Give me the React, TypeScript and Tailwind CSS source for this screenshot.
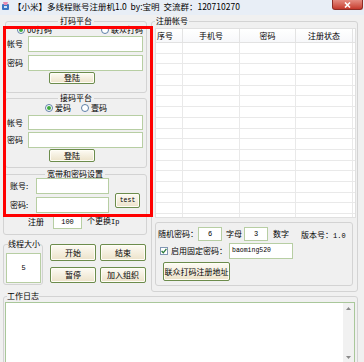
import React from 'react';

// shared looks of the themed win32 controls
const groupBorder = 'border border-[#d3d3d3] rounded-[3px]';
const editBox = 'bg-white border border-[#b7cea3]';
const mono = "font-['Liberation_Mono',monospace]";

function Btn({ children, className = '' }: { children: React.ReactNode; className?: string }) {
  return (
    <div
      className={`flex items-center justify-center border border-[#6c8c4c] rounded-[2px] bg-linear-to-b from-[#fdfbf4] to-[#ece2c9] shadow-[inset_0_0_0_1px_#fffdf6] ${className}`}
    >
      {children}
    </div>
  );
}

function Radio({ checked = false }: { checked?: boolean }) {
  return (
    <span className="w-[8px] h-[8px] shrink-0 rounded-full border border-[#5d7fa8] bg-white flex items-center justify-center">
      {checked && <span className="w-[4px] h-[4px] rounded-full bg-[#3da83d]" />}
    </span>
  );
}

function Field({ label, labelWidth, className = '' }: { label: string; labelWidth: string; className?: string }) {
  return (
    <div className={`flex items-center ${className}`}>
      <span className={`${labelWidth} shrink-0`}>{label}</span>
      <div className={`${editBox} h-full w-[115px]`} />
    </div>
  );
}

function TitleBar() {
  return (
    <div className="h-[15px] flex items-start bg-[#e8eef6]">
      <svg className="ml-[1px] mt-[1px]" width="9" height="10" viewBox="0 0 9 10">
        <rect x="1" y="3" width="7" height="6" rx="1" fill="#3a76c2" />
        <path d="M2 1 L7 1 L6 4 L3 4 Z" fill="#e58bb0" />
        <rect x="3" y="5" width="3" height="2" fill="#cfe2f7" />
      </svg>
      <span className="ml-[3px] mt-[1px] text-[8.5px] leading-[11px] whitespace-pre">
        【小米】多线程账号注册机1.0  by:宝明  交流群：120710270
      </span>
      <div className="ml-auto mr-[1px] w-[31px] h-[10px] rounded-b-[3px] border border-t-0 border-[#8d2d25] bg-linear-to-b from-[#e48b80] to-[#c5382c] flex items-center justify-center">
        <svg width="7" height="6" viewBox="0 0 7 6">
          <path d="M1 0.5 L6 5.5 M6 0.5 L1 5.5" stroke="#fff" strokeWidth="1.6" />
        </svg>
      </div>
    </div>
  );
}

function LeftColumn() {
  return (
    <div className="w-[148px] pl-[3px] flex flex-col">
      <fieldset className={`${groupBorder} ml-[2px] w-[142px] h-[77px] px-[1px]`}>
        <legend className="mx-auto px-[2px]">打码平台</legend>
        <div className="flex items-center h-[9px] -mt-[1px]">
          <span className="ml-[10px]"><Radio checked /></span>
          <span className="ml-[2px]">00打码</span>
          <span className="ml-auto"><Radio /></span>
          <span className="ml-[2px] mr-[2px]">联众打码</span>
        </div>
        <Field label="帐号" labelWidth="w-[21px]" className="mt-[2px] h-[16px]" />
        <Field label="密码" labelWidth="w-[21px]" className="mt-[3px] h-[16px]" />
        <Btn className="ml-[42px] mt-[1px] w-[46px] h-[12px]">登陆</Btn>
      </fieldset>

      <fieldset className={`${groupBorder} ml-[2px] w-[142px] h-[75px] px-[1px]`}>
        <legend className="mx-auto px-[2px]">接码平台</legend>
        <div className="flex items-center justify-center h-[8px] mt-[1px]">
          <Radio checked />
          <span className="ml-[2px]">爱码</span>
          <span className="ml-[10px]"><Radio /></span>
          <span className="ml-[2px]">壹码</span>
        </div>
        <Field label="帐号" labelWidth="w-[21px]" className="mt-[3px] h-[15px]" />
        <Field label="密码" labelWidth="w-[21px]" className="mt-[2px] h-[16px]" />
        <Btn className="ml-[42px] mt-[1px] w-[46px] h-[13px]">登陆</Btn>
      </fieldset>

      <fieldset className={`${groupBorder} mt-[1px] w-[144px] h-[66px] px-[1px]`}>
        <legend className="mx-auto px-[2px]">宽带和密码设置</legend>
        <div className="flex items-start -mt-[1px]">
          <div className="flex flex-col">
            <div className="flex items-center h-[16px]">
              <span className="w-[31px] pl-[5px]">账号:</span>
              <div className={`${editBox} w-[73px] h-full`} />
            </div>
            <div className="flex items-center h-[16px] mt-[3px]">
              <span className="w-[31px] pl-[5px]">密码:</span>
              <div className={`${editBox} w-[73px] h-full`} />
            </div>
          </div>
          <Btn className={`${mono} ml-[6px] mt-[15px] w-[25px] h-[15px] text-[6.5px]`}>test</Btn>
        </div>
        <div className="flex items-center h-[15px] mt-[1px]">
          <span className="ml-[23px]">注册</span>
          <div className={`${editBox} ${mono} ml-[9px] w-[29px] h-full flex items-center justify-center text-[7px]`}>100</div>
          <span className="ml-[5px]">
            个更换<span className={`${mono} text-[7px]`}>Ip</span>
          </span>
        </div>
      </fieldset>

      <div className="flex mt-[4px] h-[46px]">
        <fieldset className={`${groupBorder} w-[40px] h-[46px]`}>
          <legend className="ml-[4px]">线程大小</legend>
          <div className={`${editBox} ${mono} ml-[2px] mt-[4px] w-[35px] h-[30px] flex items-center justify-center text-[7px]`}>5</div>
        </fieldset>
        <div className="grid grid-cols-[46px_46px] grid-rows-[17px_16px] gap-x-[4px] gap-y-[6px] ml-[7px] mt-[5px]">
          <Btn>开始</Btn>
          <Btn>结束</Btn>
          <Btn>暂停</Btn>
          <Btn>加入组织</Btn>
        </div>
      </div>
    </div>
  );
}

function ListView() {
  const rows = Array.from({ length: 17 }, (_, i) => i);
  return (
    <div className="ml-[3px] mt-[2px] w-[201px] h-[190px] bg-white border border-[#e0e0e0] overflow-hidden">
      <div className="flex h-[14px] border-b border-[#e2e2e2] bg-linear-to-b from-white to-[#f7f8fa]">
        <div className="w-[27px] pl-[1px] flex items-center border-r border-[#e3e3e3]">序号</div>
        <div className="w-[57px] flex items-center justify-center border-r border-[#e3e3e3]">手机号</div>
        <div className="w-[56px] flex items-center justify-center border-r border-[#e3e3e3]">密码</div>
        <div className="w-[57px] flex items-center justify-center border-r border-[#e3e3e3]">注册状态</div>
        <div className="flex-1" />
      </div>
      {rows.map(r => (
        <div key={r} className="flex h-[10.7px] border-b border-[#e9e9e9]">
          <div className="w-[27px] border-r border-[#e9e9e9]" />
          <div className="w-[57px] border-r border-[#e9e9e9]" />
          <div className="w-[56px] border-r border-[#e9e9e9]" />
          <div className="w-[57px] border-r border-[#e9e9e9]" />
        </div>
      ))}
    </div>
  );
}

function RegisterPanel() {
  return (
    <fieldset className={`${groupBorder} w-[207px] h-[276px]`}>
      <legend className="ml-[3px] px-[1px]">注册帐号</legend>
      <ListView />
      <div className={`${groupBorder} ml-[3px] mt-[4px] w-[198px] h-[64px] pl-[2px] flex flex-col`}>
        <div className="flex items-center h-[14px] mt-[4px]">
          <span>随机密码：</span>
          <div className={`${editBox} ${mono} w-[24px] h-full flex items-center justify-center text-[7px]`}>6</div>
          <span className="ml-[4px]">字母</span>
          <div className={`${editBox} ${mono} ml-[2px] w-[24px] h-full flex items-center justify-center text-[7px]`}>3</div>
          <span className="ml-[5px]">数字</span>
          <span className="ml-[12px] mt-[2px]">
            版本号：<span className={`${mono} text-[7px]`}>1.0</span>
          </span>
        </div>
        <div className="flex items-center h-[16px] mt-[2px]">
          <span className="ml-[2px] w-[8px] h-[8px] border border-[#8197b3] bg-white flex items-center justify-center">
            <svg width="6" height="6" viewBox="0 0 6 6">
              <path d="M0.6 3 L2.3 4.8 L5.4 0.8" fill="none" stroke="#2a7a3a" strokeWidth="1.3" />
            </svg>
          </span>
          <span className="ml-[3px]">启用固定密码：</span>
          <div className={`${editBox} ${mono} ml-[2px] w-[64px] h-full pl-[2px] flex items-center text-[6.5px]`}>baoming520</div>
        </div>
        <Btn className="ml-[5px] mt-[3px] w-[67px] h-[19px]">联众打码注册地址</Btn>
      </div>
    </fieldset>
  );
}

function WorkLog() {
  return (
    <fieldset className={`${groupBorder} ml-[3px] -mt-[1px] w-[355px] h-[75px]`}>
      <legend className="ml-[3px]">工作日志</legend>
      <div className="ml-[1px] mt-[1px] w-[350px] h-[61px] bg-white border border-[#a9c79a] flex justify-end">
        <div className="w-[11px] bg-[#f1f1f1] flex flex-col justify-between">
          <div className="h-[10px] flex items-center justify-center">
            <svg width="5" height="3" viewBox="0 0 5 3"><path d="M0 3 L2.5 0 L5 3 Z" fill="#8a8a8a" /></svg>
          </div>
          <div className="h-[10px] flex items-center justify-center">
            <svg width="5" height="3" viewBox="0 0 5 3"><path d="M0 0 L2.5 3 L5 0 Z" fill="#8a8a8a" /></svg>
          </div>
        </div>
      </div>
    </fieldset>
  );
}

export default function App() {
  return (
    <div className="relative w-[364px] h-[362px] overflow-hidden bg-[#f0f0f0] text-black text-[8px] leading-[10px] font-['Noto_Sans_CJK_SC',sans-serif]">
      <TitleBar />
      <div className="flex flex-col">
        <div className="flex mt-[1px]">
          <LeftColumn />
          <div className="ml-[3px]">
            <RegisterPanel />
          </div>
        </div>
        <WorkLog />
      </div>
      {/* red highlight drawn over the screenshot */}
      <div className="absolute left-[3px] top-[26px] w-[150px] h-[191px] border-[3px] border-[#ff0000] pointer-events-none" />
    </div>
  );
}
